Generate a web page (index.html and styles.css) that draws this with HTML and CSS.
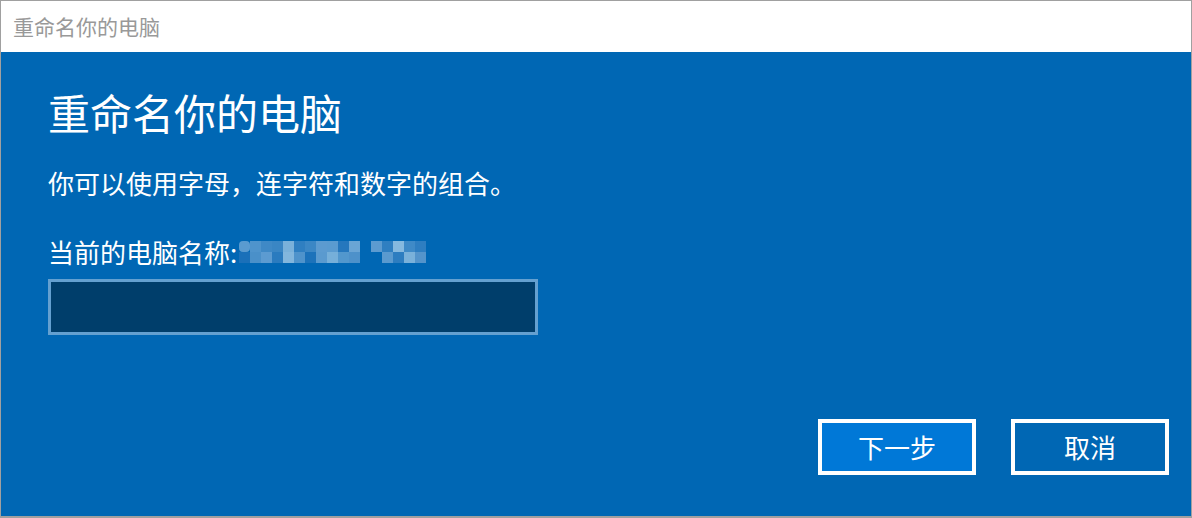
FILE: index.html
```html
<!DOCTYPE html>
<html lang="zh-CN">
<head>
<meta charset="utf-8">
<title>重命名你的电脑</title>
<link rel="stylesheet" href="styles.css">
</head>
<body>
<div class="window">
  <div class="titlebar">重命名你的电脑</div>
  <div class="content">
    <h1 class="heading">重命名你的电脑</h1>
    <p class="desc">你可以使用字母，连字符和数字的组合。</p>
    <p class="label">当前的电脑名称:<svg class="blur" width="190" height="24" viewBox="0 0 190 24" aria-hidden="true">
      <rect x="0" y="0" width="11" height="11" rx="4" fill="#5a9bd0"/>
      <rect x="11" y="0" width="11" height="11" fill="#4f94cc"/>
      <rect x="22" y="0" width="11" height="11" fill="#3f89c6"/>
      <rect x="33" y="0" width="11" height="11" fill="#3a86c4"/>
      <rect x="44" y="0" width="11" height="11" fill="#7ab1da"/>
      <rect x="55" y="0" width="11" height="11" fill="#2f7fc1"/>
      <rect x="66" y="0" width="11" height="11" fill="#3b87c5"/>
      <rect x="77" y="0" width="11" height="11" fill="#5c9bd0"/>
      <rect x="88" y="0" width="11" height="11" fill="#5a9bd0"/>
      <rect x="99" y="0" width="11" height="11" fill="#2577bd"/>
      <rect x="110" y="0" width="11" height="11" fill="#6aa5d5"/>
      <rect x="132" y="0" width="11" height="11" fill="#5c9bd0"/>
      <rect x="143" y="0" width="11" height="11" fill="#2f7fc1"/>
      <rect x="154" y="0" width="11" height="11" fill="#86b9df"/>
      <rect x="165" y="0" width="11" height="11" fill="#3f8ac7"/>
      <rect x="176" y="0" width="11" height="11" fill="#2e7ec1"/>
      <rect x="0" y="11" width="11" height="11" fill="#1a70b9"/>
      <rect x="11" y="11" width="11" height="11" fill="#4a90c9"/>
      <rect x="22" y="11" width="11" height="11" fill="#5c9bd1"/>
      <rect x="33" y="11" width="11" height="11" fill="#2a7bbf"/>
      <rect x="44" y="11" width="11" height="11" fill="#82b6dd"/>
      <rect x="55" y="11" width="11" height="11" fill="#4f93cb"/>
      <rect x="66" y="11" width="11" height="11" fill="#1c72ba"/>
      <rect x="77" y="11" width="11" height="11" fill="#5a9acf"/>
      <rect x="88" y="11" width="11" height="11" fill="#76afd9"/>
      <rect x="99" y="11" width="11" height="11" fill="#5297cd"/>
      <rect x="110" y="11" width="11" height="11" fill="#4d91ca"/>
      <rect x="143" y="11" width="11" height="11" fill="#5a9acf"/>
      <rect x="154" y="11" width="11" height="11" fill="#2d7dc0"/>
      <rect x="165" y="11" width="11" height="11" fill="#7ab1da"/>
      <rect x="176" y="11" width="11" height="11" fill="#5494cb"/>
    </svg></p>
    <div class="input"></div>
    <div class="actions">
      <button class="btn btn-primary" type="button">下一步</button>
      <button class="btn" type="button">取消</button>
    </div>
  </div>
</div>
</body>
</html>
```

FILE: styles.css
```css
html, body {
  margin: 0;
  padding: 0;
  background: #a0a0a0;
}

body {
  width: 1192px;
  height: 518px;
  overflow: hidden;
  font-family: "Noto Sans CJK SC", "Microsoft YaHei", sans-serif;
}

.window {
  box-sizing: border-box;
  width: 1192px;
  height: 518px;
  border-top: 1px solid #a0a0a0;
  border-left: 1px solid #a0a0a0;
  border-right: 1px solid #a0a0a0;
  border-bottom: 2px solid #a0a0a0;
  display: flex;
  flex-direction: column;
}

.titlebar {
  height: 51px;
  line-height: 51px;
  background: #ffffff;
  color: #999999;
  font-size: 21px;
  padding-left: 12px;
  flex: none;
}

.content {
  flex: 1;
  background: #0067b4;
  color: #ffffff;
  padding: 32px 22px 41px 47px;
  display: flex;
  flex-direction: column;
  align-items: flex-start;
}

.heading {
  margin: 0;
  font-size: 42px;
  font-weight: normal;
  line-height: 56px;
}

.desc {
  margin: 25px 0 0;
  font-size: 26px;
  line-height: 36px;
}

.label {
  margin: 33px 0 0;
  font-size: 26px;
  line-height: 36px;
  display: flex;
  align-items: center;
}

.blur {
  display: block;
  margin-left: 2px;
  margin-top: 2px;
}

.input {
  box-sizing: border-box;
  margin-top: 9px;
  width: 490px;
  height: 56px;
  border: 3px solid #64a0d0;
  background: #003e6b;
}

.actions {
  margin-top: auto;
  align-self: stretch;
  display: flex;
  justify-content: flex-end;
  gap: 35px;
}

.btn {
  box-sizing: border-box;
  width: 158px;
  height: 56px;
  border: 4px solid #ffffff;
  background: #0067b4;
  color: #ffffff;
  font-family: "Noto Sans CJK SC", "Microsoft YaHei", sans-serif;
  font-size: 26px;
  line-height: 1;
  padding: 0;
}

.btn-primary {
  background: #0078d7;
}
```
